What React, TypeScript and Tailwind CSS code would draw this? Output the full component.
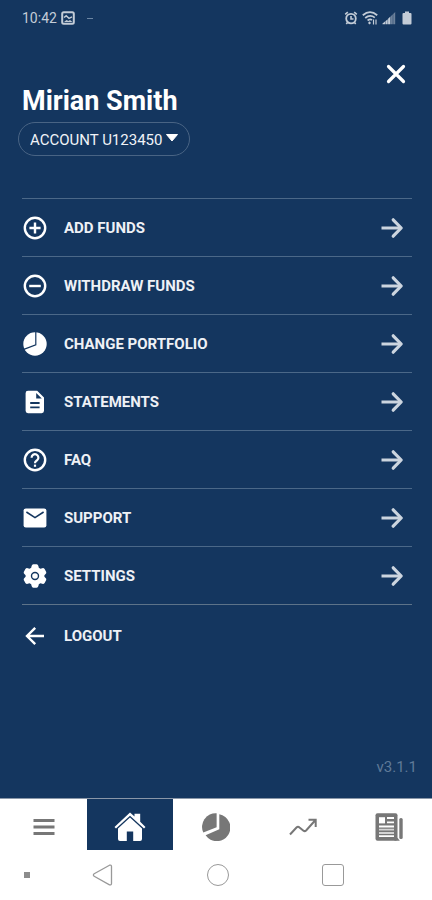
import type { ReactNode } from "react";

type IconProps = { className?: string };

function Svg({ className = "size-6", children }: IconProps & { children: ReactNode }) {
  return (
    <svg viewBox="0 0 24 24" fill="none" className={`${className} shrink-0`} aria-hidden="true">
      {children}
    </svg>
  );
}

const AddIcon = () => (
  <Svg>
    <circle cx="12" cy="12" r="10.2" stroke="currentColor" strokeWidth="2.4" />
    <path d="M12 6.4v11.2M6.4 12h11.2" stroke="currentColor" strokeWidth="2.4" />
  </Svg>
);

const RemoveIcon = () => (
  <Svg>
    <circle cx="12" cy="12" r="10.2" stroke="currentColor" strokeWidth="2.4" />
    <path d="M6.2 12h11.6" stroke="currentColor" strokeWidth="2.4" />
  </Svg>
);

const PieIcon = () => (
  <Svg>
    <circle cx="12" cy="12" r="11.7" fill="currentColor" />
    <path d="M12.8 0v12.800L.8 17.400" stroke="#14365f" strokeWidth="1.200" />
  </Svg>
);

const DocumentIcon = () => (
  <Svg>
    <path
      fillRule="evenodd"
      d="M5 .8h9.2L21 7.6v13.2a2.4 2.4 0 0 1-2.4 2.4H5a2.4 2.4 0 0 1-2.4-2.4V3.2A2.4 2.4 0 0 1 5 .8zM13.2 3v5.6h5.6zM7.2 12v1.9h9.4V12zM7.2 16.4v1.9h9.4v-1.9z"
      fill="currentColor"
    />
  </Svg>
);

const HelpIcon = () => (
  <Svg>
    <circle cx="12" cy="12" r="10.2" stroke="currentColor" strokeWidth="2.4" />
    <path d="M8.6 9.7a3.4 3.4 0 1 1 5.6 2.5c-1.3 1.1-2.2 1.5-2.2 3" stroke="currentColor" strokeWidth="2.2" />
    <path d="M10.9 16.6h2.2v2.2h-2.2z" fill="currentColor" />
  </Svg>
);

const MailIcon = () => (
  <Svg>
    <rect x=".6" y="2.4" width="22.8" height="19" rx="2.2" fill="currentColor" />
    <path d="M3.4 6l8.6 5.6L20.6 6" stroke="#14365f" strokeWidth="1.6" />
  </Svg>
);

const GearIcon = () => (
  <Svg>
    <path
      d="M8.600 2Q9 .2 10.400.2h3.200q1.400 0 1.800 1.800l.4 1.800 1.600.9 1.900-.5q1.500-.4 2.300.9l1.500 2.600q.7 1.200-.5 2.300L21.400 11.200v1.600l1.200 1.200q1.200 1.100.5 2.300l-1.500 2.600q-.8 1.300-2.300.9l-1.900-.5-1.600.9-.4 1.800q-.4 1.800-1.800 1.800h-3.200Q9 23.800 8.600 22l-.4-1.800-1.600-.9-1.900.5q-1.500.4-2.300-.9L.9 16.300q-.7-1.200.5-2.300l1.200-1.200v-1.600L1.400 10Q.2 8.900.9 7.700l1.500-2.600q.8-1.300 2.300-.9l1.900.5 1.600-.9z"
      fill="currentColor"
    />
    <circle cx="12" cy="12" r="3.500" stroke="#14365f" strokeWidth="1.400" />
  </Svg>
);

const BackIcon = () => (
  <Svg>
    <path d="M21 12H4.600M12.200 3.800L4 12l8.200 8.200" stroke="currentColor" strokeWidth="2.400" />
  </Svg>
);

const ForwardIcon = () => (
  <Svg className="size-6 text-[#ccd5df]">
    <path d="M1.500 12h19" stroke="currentColor" strokeWidth="3" />
    <path d="M13.200 3.800L21.200 12l-8 8.200" stroke="currentColor" strokeWidth="3.200" strokeLinecap="round" strokeLinejoin="round" />
  </Svg>
);

const items = [
  { label: "ADD FUNDS", icon: <AddIcon /> },
  { label: "WITHDRAW FUNDS", icon: <RemoveIcon /> },
  { label: "CHANGE PORTFOLIO", icon: <PieIcon /> },
  { label: "STATEMENTS", icon: <DocumentIcon /> },
  { label: "FAQ", icon: <HelpIcon /> },
  { label: "SUPPORT", icon: <MailIcon /> },
  { label: "SETTINGS", icon: <GearIcon /> },
];

function StatusBar() {
  return (
    <div className="flex h-9 items-center justify-between pr-[18px] pl-[22px] text-[#c3ccd7]">
      <div className="flex items-center gap-1">
        <span className="text-sm">10:42</span>
        <svg viewBox="0 0 14 14" className="size-3.5" fill="none" aria-hidden="true">
          <rect x="1.200" y="1.200" width="11.600" height="11.600" rx="1.500" stroke="currentColor" strokeWidth="2" />
          <path d="M3 6.500l2.200-1.700L8 7.300l3-1.500" stroke="currentColor" strokeWidth="1.500" />
          <path d="M3 11l2.500-2 2 1 1.500-1 2.500 2z" fill="currentColor" />
        </svg>
        <span className="ml-2 h-px w-1.5 bg-[#6d86a3]" />
      </div>
      <div className="flex items-center gap-1">
        <svg viewBox="0 0 14 14" className="size-3.5" fill="none" stroke="currentColor" aria-hidden="true">
          <circle cx="7" cy="7.600" r="4.800" strokeWidth="1.800" />
          <path d="M7 5v3h2.500M1.200 3.400l2.600-2.200M12.800 3.400l-2.600-2.200M3.500 11.500l-1.200 1.500M10.500 11.500l1.200 1.500" strokeWidth="1.600" />
        </svg>
        <svg viewBox="0 0 16 14" className="h-3.5 w-4" fill="none" stroke="currentColor" aria-hidden="true">
          <path d="M.8 4.200Q8-2 15.200 4.200M3.200 7Q8 3 12.800 6.600M5.600 9.500Q8 7.600 10 9" strokeWidth="1.800" />
          <path d="M7.500 10.200L9 12l-1.500 1.500L6 12z" fill="currentColor" stroke="none" />
          <path d="M11.500 8.500v5M14 8.500v5" strokeWidth="1.200" />
        </svg>
        <svg viewBox="0 0 14 14" className="size-3.5" aria-hidden="true">
          <path d="M.5 13.300H3v-2.800l-2.500 2zM3.400 13.300h2.300V8.200l-2.300 2zM6.100 13.300h2.300V5.600l-2.300 2.200z" fill="currentColor" />
          <path d="M8.800 13.300h2V3.200l-2 2zM11.200 13.300h2V1l-2 2z" fill="currentColor" opacity=".5" />
        </svg>
        <svg viewBox="0 0 14 14" className="size-3.5" fill="currentColor" aria-hidden="true">
          <path d="M5 .5h4v1.400h1.500a1 1 0 0 1 1 1v9.600a1 1 0 0 1-1 1h-7a1 1 0 0 1-1-1V2.900a1 1 0 0 1 1-1H5z" />
        </svg>
      </div>
    </div>
  );
}

function TabBar() {
  return (
    <nav className="grid h-[52px] shrink-0 grid-cols-5 border-t border-[#8a97a8] bg-white pl-px text-[#777777]">
      <button aria-label="Menu" className="flex items-center justify-center pt-1">
        <svg viewBox="0 0 22 18" className="h-[18px] w-[22px]" aria-hidden="true">
          <path d="M.5 2.500h21M.5 9h21M.5 15.500h21" stroke="currentColor" strokeWidth="2.800" />
        </svg>
      </button>
      <button aria-label="Home" className="flex items-center justify-center bg-[#14365f] pt-1 text-white">
        <svg viewBox="0 0 32 30" className="h-[30px] w-8" fill="currentColor" aria-hidden="true">
          <path d="M16 .5L20.500 4.600V1.800h5.700v8L31.500 15 30 16.600 16 3.800 2 16.600.5 15z" />
          <path d="M16 5.600l12 11V27a2 2 0 0 1-2 2h-6.800V19.500h-6.400V29H6a2 2 0 0 1-2-2V16.600z" />
        </svg>
      </button>
      <button aria-label="Portfolio" className="flex items-center justify-center pt-1">
        <svg viewBox="0 0 28 28" className="size-7" fill="none" aria-hidden="true">
          <path d="M14.600.3v13.900L1.300 19.600A13.600 13.600 0 0 1 14.600.3z" fill="currentColor" />
          <path d="M17.300 1.200A13.600 13.600 0 1 1 3.600 22.300L17.300 16.200z" fill="currentColor" />
        </svg>
      </button>
      <button aria-label="Performance" className="flex items-center justify-center pt-1">
        <svg viewBox="0 0 28 18" className="h-[18px] w-7" fill="none" stroke="currentColor" strokeWidth="2" aria-hidden="true">
          <path d="M1 16.500L7.500 9.500q1.500-1.500 3 0l4 3.200q1.300 1 2.600-.2L26.500 2M19.500 1.800h7.200V9" />
        </svg>
      </button>
      <button aria-label="News" className="flex items-center justify-center pt-1">
        <svg viewBox="0 0 28 28" className="size-7" aria-hidden="true">
          <rect x=".5" y=".3" width="22" height="27.400" rx="2" fill="currentColor" />
          <path d="M19 27.700h5.800l-2.300-3z" fill="currentColor" />
          <rect x="24.300" y="5" width="3.400" height="21" rx="1.600" fill="currentColor" />
          <path d="M4 4.200h6v6.200H4z" fill="white" />
          <path d="M12 5h7M12 9.400h7M4 13.500h15M4 23.200h15" stroke="white" strokeWidth="1.800" />
          <path d="M4 16.700h15M4 20h15" stroke="#d4d4d4" strokeWidth="1.800" />
        </svg>
      </button>
    </nav>
  );
}

function SystemBar() {
  return (
    <div className="flex h-[50px] shrink-0 items-center bg-white pr-[88px] pl-6 text-[#999999]">
      <span className="size-1.5 bg-[#8c8c8c]" />
      <div className="ml-[62px] flex flex-1 items-center justify-between">
        <button aria-label="Back">
          <svg viewBox="0 0 22 22" className="size-[22px]" fill="none" stroke="currentColor" aria-hidden="true">
            <path d="M17.500 1.200L2.200 9.800q-1.600 1.200 0 2.400l15.300 8.600q2 .6 2-1.200V2.400q0-1.800-2-1.200z" strokeWidth="1.300" />
          </svg>
        </button>
        <button aria-label="Home screen" className="size-[22px] rounded-full border border-current" />
        <button aria-label="Recent apps" className="size-[22px] rounded-[3px] border border-current" />
      </div>
    </div>
  );
}

export default function App() {
  return (
    <div className="flex min-h-screen flex-col bg-[#14365f] font-['Roboto',sans-serif] text-white">
      <StatusBar />
      <main className="flex flex-1 flex-col pr-5 pl-[22px]">
        <header>
          <div className="flex h-12 items-end justify-end pr-1.5">
            <button aria-label="Close" className="flex size-5 items-center justify-center">
              <svg viewBox="0 0 20 20" className="size-5" aria-hidden="true">
                <path d="M2.500 2.500l15 15M17.500 2.500l-15 15" stroke="currentColor" strokeWidth="3.200" strokeLinecap="round" />
              </svg>
            </button>
          </div>
          <h1 className="pt-px text-[27px] leading-8 font-bold">Mirian Smith</h1>
          <div className="relative mt-[5px] -ml-1 inline-block">
            <select
              aria-label="Account"
              className="h-[34px] w-[172px] appearance-none rounded-full border border-[#496484] bg-transparent pt-0.5 pl-[11px] text-[15px] text-[#f0f3f7]"
            >
              <option>ACCOUNT U123450</option>
            </select>
            <svg viewBox="0 0 12 8" className="pointer-events-none absolute top-3 right-3 h-2 w-3" aria-hidden="true">
              <path d="M.5.5h11L6 7z" fill="currentColor" stroke="currentColor" strokeLinejoin="round" />
            </svg>
          </div>
        </header>
        <ul className="mt-[42px] border-t border-[#4b6888]">
          {items.map((item) => (
            <li key={item.label} className="border-b border-[#4b6888] last:border-[#5d7389]">
              <button className="flex h-[57px] w-full items-center gap-[17px] pr-2 pl-px">
                {item.icon}
                <span className="flex-1 pt-0.5 text-left text-[15px] font-bold text-[#eef1f6]">{item.label}</span>
                <ForwardIcon />
              </button>
            </li>
          ))}
        </ul>
        <button className="flex h-[61px] items-center gap-[17px] pl-px">
          <BackIcon />
          <span className="pt-0.5 text-[15px] font-bold text-[#eef1f6]">LOGOUT</span>
        </button>
      </main>
      <p className="px-[15px] pb-[21px] text-right text-[15px] leading-5 text-[#5f7a98]">v3.1.1</p>
      <TabBar />
      <SystemBar />
    </div>
  );
}
